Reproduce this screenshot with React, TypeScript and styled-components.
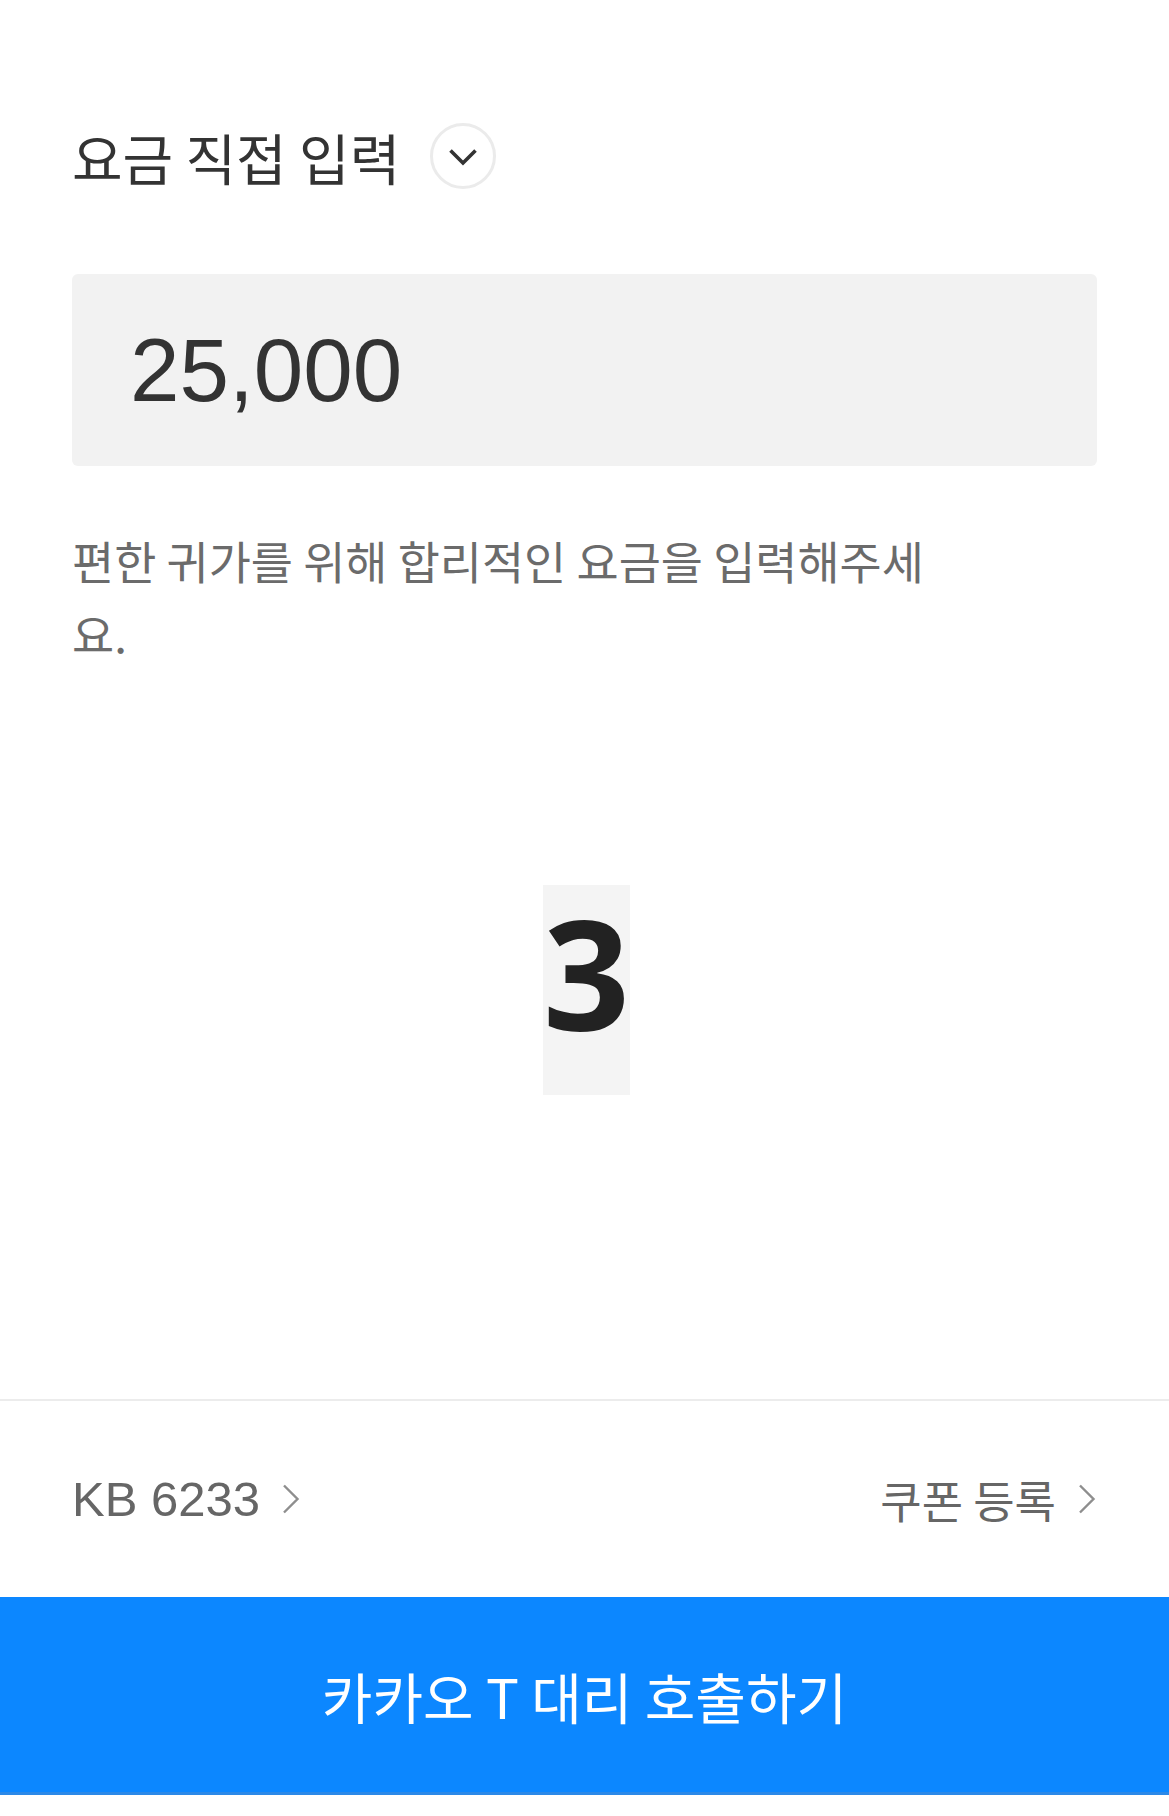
import styled, { createGlobalStyle } from "styled-components"

const GlobalStyle = createGlobalStyle`
  html, body {
    margin: 0;
    padding: 0;
    background: #ffffff;
  }
  * {
    box-sizing: border-box;
  }
`

const KR = `"Noto Sans CJK KR", "Noto Sans", sans-serif`
const LATIN = `"Liberation Sans", Arial, "Noto Sans CJK KR", sans-serif`

const ChevronDown = () => (
  <svg width="30" height="18" viewBox="0 0 30 18" fill="none">
    <path d="M2.5 2.5 L15 15 L27.5 2.5" stroke="#333333" strokeWidth="3.6" />
  </svg>
)

const ChevronRight = () => (
  <svg width="18" height="30" viewBox="0 0 18 30" fill="none">
    <path d="M2 1.5 L15.5 15 L2 28.5" stroke="#8e8e8e" strokeWidth="2.4" />
  </svg>
)

const App = () => {
  return (
    <Page>
      <GlobalStyle />
      <TitleRow>
        <Title>요금 직접 입력</Title>
        <ToggleButton aria-label="펼치기">
          <ChevronDown />
        </ToggleButton>
      </TitleRow>

      <FareBox>
        <FareValue>25,000</FareValue>
      </FareBox>

      <Hint>편한 귀가를 위해 합리적인 요금을 입력해주세요.</Hint>

      <CountArea>
        <CountDigit>3</CountDigit>
      </CountArea>

      <Footer>
        <OptionRow>
          <OptionLink>
            <OptionLabel $latin>KB 6233</OptionLabel>
            <ChevronRight />
          </OptionLink>
          <OptionLink>
            <OptionLabel>쿠폰 등록</OptionLabel>
            <ChevronRight />
          </OptionLink>
        </OptionRow>
        <CallButton>카카오 T 대리 호출하기</CallButton>
      </Footer>
    </Page>
  )
}

const Page = styled.div`
  width: 1169px;
  height: 1816px;
  display: flex;
  flex-direction: column;
  background: #ffffff;
  padding-bottom: 21px;
`

const TitleRow = styled.div`
  display: flex;
  align-items: center;
  gap: 30px;
  padding: 123px 72px 0;
`

const Title = styled.h1`
  margin: 0;
  font-family: ${KR};
  font-weight: 400;
  font-size: 55px;
  line-height: 66px;
  color: #333333;
`

const ToggleButton = styled.button`
  width: 66px;
  height: 66px;
  padding: 0;
  border: 3px solid #ebebeb;
  border-radius: 50%;
  background: #ffffff;
  display: flex;
  align-items: center;
  justify-content: center;
  padding-top: 2px;
`

const FareBox = styled.div`
  margin: 85px 72px 0 72px;
  height: 192px;
  border-radius: 6px;
  background: #f2f2f2;
  display: flex;
  align-items: center;
  padding-left: 58px;
`

const FareValue = styled.span`
  font-family: ${LATIN};
  font-size: 89px;
  color: #333333;
  line-height: 1;
`

const Hint = styled.p`
  margin: 58px 72px 0;
  max-width: 880px;
  font-family: ${KR};
  font-size: 45.8px;
  line-height: 73px;
  color: #6b6b6b;
`

const CountArea = styled.div`
  display: flex;
  justify-content: center;
  margin-top: 215px;
  padding-left: 4px;
`

const CountDigit = styled.div`
  width: 87px;
  height: 210px;
  background: #f4f4f4;
  font-family: "Open Sans", "Noto Sans", sans-serif;
  font-weight: 700;
  font-size: 152px;
  line-height: 176px;
  text-align: center;
  color: #222222;
`

const Footer = styled.div`
  margin-top: auto;
  display: flex;
  flex-direction: column;
`

const OptionRow = styled.div`
  height: 198px;
  border-top: 2px solid #ececec;
  display: flex;
  align-items: center;
  justify-content: space-between;
  padding: 0 73px 0 72px;
`

const OptionLink = styled.div`
  display: flex;
  align-items: center;
  gap: 22px;
`

const OptionLabel = styled.span<{ $latin?: boolean }>`
  font-family: ${({ $latin }) => ($latin ? LATIN : KR)};
  font-size: ${({ $latin }) => ($latin ? "49px" : "45px")};
  line-height: 1;
  color: #666666;
`

const CallButton = styled.button`
  width: 100%;
  height: 198px;
  border: none;
  border-bottom: 3px solid #2b89e8;
  background: #0c87ff;
  color: #ffffff;
  font-family: ${KR};
  font-size: 55px;
  font-weight: 400;
  padding: 0;
`

export default App
